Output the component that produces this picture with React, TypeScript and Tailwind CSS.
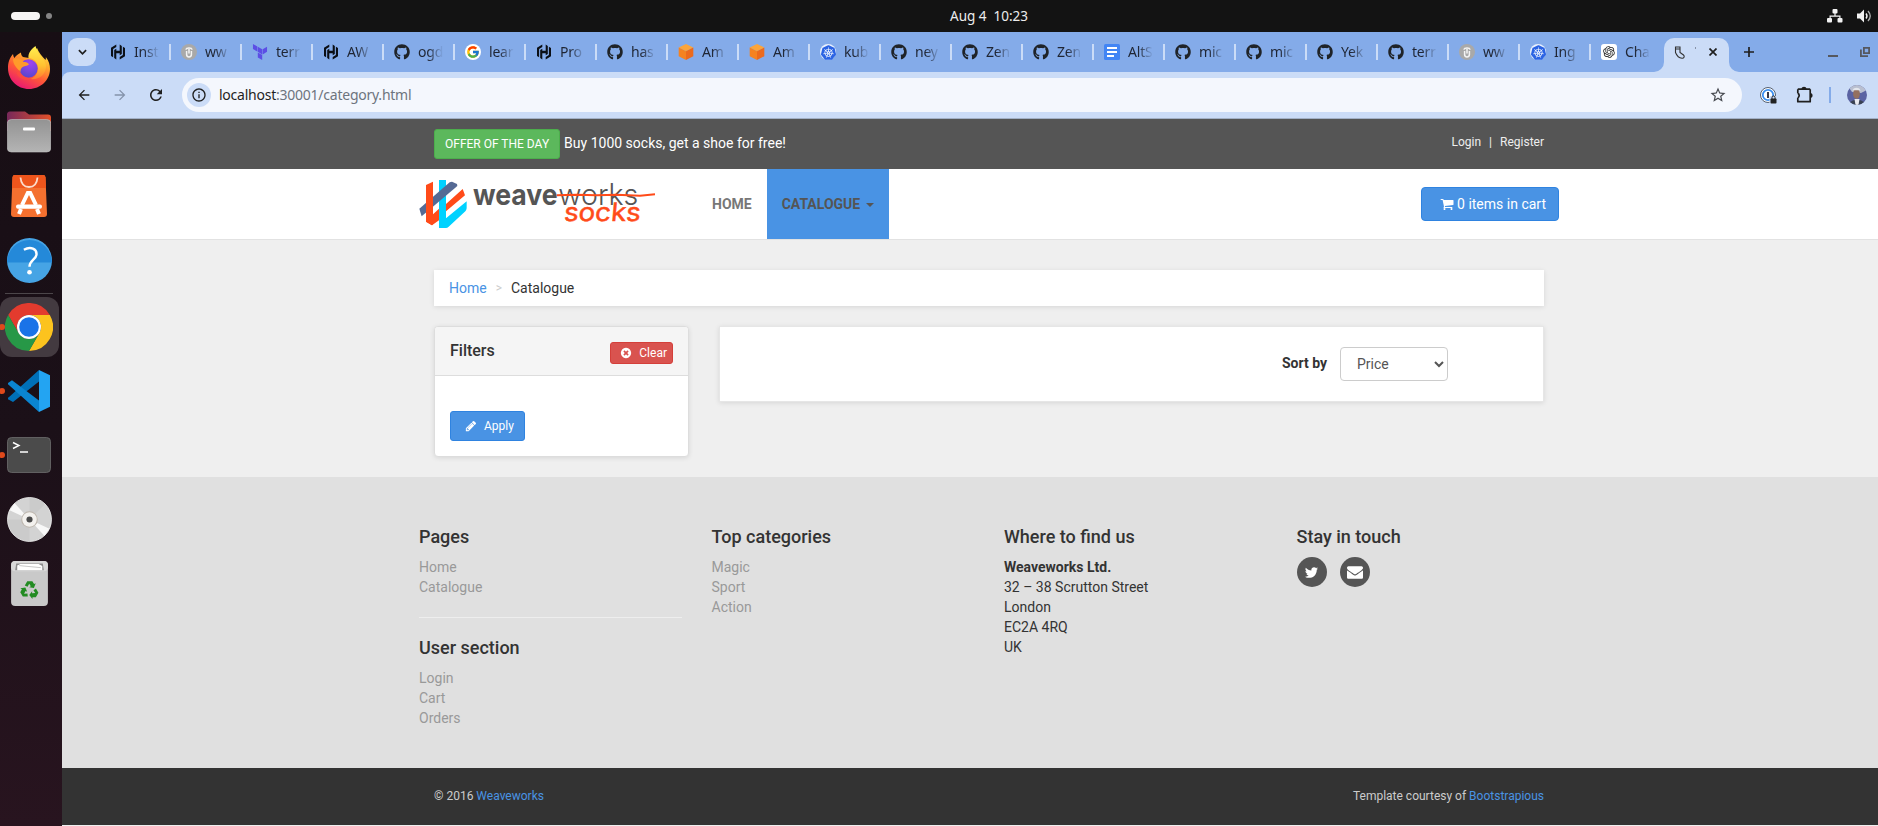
import React from "react";
import { FaGithub } from "react-icons/fa";
import { FcGoogle } from "react-icons/fc";
import { SiTerraform, SiKubernetes } from "react-icons/si";
import { RiOpenaiFill } from "react-icons/ri";
import { MdArrowBack, MdArrowForward, MdRefresh, MdStarBorder, MdOutlineInfo } from "react-icons/md";

/* ---------- favicons ---------- */

const HashiIcon = () => (
  <svg viewBox="0 0 16 16" className="size-4" fill="#0b0f16">
    <path d="M6.3.6 1 3.700v8.400l2.100 1.200V5l3.200-1.900z" />
    <path d="M9.700 15.400 15 12.300V3.900l-2.100-1.200V11l-3.200 1.900z" />
    <path d="M9.700.6v6.200H6.300V4.700L4.200 5.900v8.100l2.100 1.400V9.200h3.400v2.100l2.100-1.200V2z" />
  </svg>
);

const GlobeUIcon = () => (
  <svg viewBox="0 0 16 16" className="size-4">
    <circle cx="8" cy="8" r="8" fill="#a9a9a9" />
    <path d="M5.600 7v3.600a2.400 2.400 0 0 0 4.800 0V7M4.800 5.600C5.400 3.600 10.600 3.600 11.200 5.600M8 5v4.500" fill="none" stroke="#f4f4f4" strokeWidth="1.500" />
  </svg>
);

const GithubTabIcon = () => <FaGithub className="size-4 text-[#1f2328]" />;
const TerraTabIcon = () => <SiTerraform className="size-4 text-[#5c4ee5]" />;
const GoogleTabIcon = () => (
  <span className="flex size-4 items-center justify-center rounded-full bg-white">
    <FcGoogle className="size-3.5" />
  </span>
);
const AwsIcon = () => (
  <svg viewBox="0 0 16 16" className="size-4">
    <path d="M8 0 15.300 3.500 8 7.200.7 3.500z" fill="#fda53a" />
    <path d="M.7 3.500 8 7.200V16L.7 12.200z" fill="#f58220" />
    <path d="M15.300 3.500 8 7.200V16l7.300-3.800z" fill="#ec6a1d" />
  </svg>
);
const KubeIcon = () => (
  <span className="flex size-4 items-center justify-center rounded-full bg-[#e9f0fd]">
    <SiKubernetes className="size-[15px] text-[#2b63e3]" />
  </span>
);
const DocsIcon = () => (
  <svg viewBox="0 0 16 16" className="size-4">
    <rect width="16" height="16" rx="1.500" fill="#4285f4" />
    <path d="M3 4h10M3 8h10M3 12h7" stroke="#fff" strokeWidth="2" />
  </svg>
);
const GptIcon = () => (
  <span className="flex size-4 items-center justify-center rounded-[3px] bg-white">
    <RiOpenaiFill className="size-3.5 text-[#222]" />
  </span>
);

const tabs: { icon: () => React.JSX.Element; label: string }[] = [
  { icon: HashiIcon, label: "Inst" },
  { icon: GlobeUIcon, label: "ww" },
  { icon: TerraTabIcon, label: "terr" },
  { icon: HashiIcon, label: "AW" },
  { icon: GithubTabIcon, label: "ogd" },
  { icon: GoogleTabIcon, label: "lear" },
  { icon: HashiIcon, label: "Pro" },
  { icon: GithubTabIcon, label: "has" },
  { icon: AwsIcon, label: "Am" },
  { icon: AwsIcon, label: "Am" },
  { icon: KubeIcon, label: "kub" },
  { icon: GithubTabIcon, label: "ney" },
  { icon: GithubTabIcon, label: "Zen" },
  { icon: GithubTabIcon, label: "Zen" },
  { icon: DocsIcon, label: "AltS" },
  { icon: GithubTabIcon, label: "mic" },
  { icon: GithubTabIcon, label: "mic" },
  { icon: GithubTabIcon, label: "Yek" },
  { icon: GithubTabIcon, label: "terr" },
  { icon: GlobeUIcon, label: "ww" },
  { icon: KubeIcon, label: "Ing" },
  { icon: GptIcon, label: "Cha" },
];

/* ---------- dock ---------- */

const FirefoxIcon = () => (
  <svg viewBox="0 0 42 43" className="mb-px h-[43px] w-[42px]">
    <defs>
      <linearGradient id="ffBody" x1=".8" y1="0" x2=".25" y2="1">
        <stop offset="0" stopColor="#ffe84a" />
        <stop offset=".3" stopColor="#ffab2e" />
        <stop offset=".6" stopColor="#ff5a35" />
        <stop offset="1" stopColor="#e8117a" />
      </linearGradient>
      <radialGradient id="ffGlobe" cx=".6" cy=".2" r=".9">
        <stop offset="0" stopColor="#a044f0" />
        <stop offset="1" stopColor="#5146c8" />
      </radialGradient>
      <linearGradient id="ffTail" x1=".5" y1="0" x2=".5" y2="1">
        <stop offset="0" stopColor="#fff150" />
        <stop offset=".6" stopColor="#ffc030" />
        <stop offset="1" stopColor="#ff7a30" />
      </linearGradient>
    </defs>
    <path d="M5 8c.3 2 .8 3 1.500 4C8 9.500 10 8.500 13 6.500c0 2 .5 3 2 4.500l6 1 8-10c2 5 5 8 8.500 12 .5-1 .5-2 .3-3C41 15 42 19 42 23c0 11-9.400 20-21 20S0 34 0 22c0-5 1-9 5-14z" fill="url(#ffBody)" />
    <path d="M27.500 0C22 4 20 8 20.500 12c6 .5 9.500 5 9.500 10 0 6-3 9-8 11 9 1 16-4 16-13 0-7-8-9-10.500-20z" fill="url(#ffTail)" />
    <circle cx="20.500" cy="22.500" r="9.200" fill="url(#ffGlobe)" />
    <path d="M5 13c5-2 9 0 10.500 3 2.500 0 4.500.5 5.500 2.500-2 2-5 1-7 3-1.500 1.500-1.500 3-1.500 4.500C9 22 5 19 5 13z" fill="#ff9a2a" />
    <path d="M11.500 24c2 6 8 9.500 14 7-5 5-15 3-17-4z" fill="#ff4f3c" opacity=".6" />
  </svg>
);

const FilesIcon = () => (
  <svg viewBox="0 0 44 42" className="h-[42px] w-[44px]">
    <defs>
      <linearGradient id="flBack" x1="0" x2="1">
        <stop offset="0" stopColor="#77285a" />
        <stop offset="1" stopColor="#e2512a" />
      </linearGradient>
      <linearGradient id="flFront" x1="0" y1="0" x2="0" y2="1">
        <stop offset="0" stopColor="#939393" />
        <stop offset="1" stopColor="#b4b4b4" />
      </linearGradient>
    </defs>
    <path d="M0 4a3 3 0 0 1 3-3.500h15l4 3h19a3 3 0 0 1 3 3V20H0z" fill="url(#flBack)" />
    <rect x=".3" y="8.500" width="43.500" height="32.500" rx="4" fill="url(#flFront)" stroke="#c2c2c2" strokeWidth=".6" />
    <rect x="16" y="16.500" width="12" height="3" rx="1" fill="#fff" />
  </svg>
);

const SoftwareIcon = () => (
  <svg viewBox="0 0 36 42" className="h-[42px] w-[36px]">
    <path d="M4 0h28a2.500 2.500 0 0 1 2.500 2.300L36 39a3 3 0 0 1-3 3H3a3 3 0 0 1-3-3L1.500 2.300A2.500 2.500 0 0 1 4 0z" fill="#f4702f" />
    <path d="M4 0h28a2.500 2.500 0 0 1 2.500 2.300L35 13H1l.5-10.700A2.500 2.500 0 0 1 4 0z" fill="#ee551c" />
    <path d="M9.500 2.500c.5 6 3.500 9.500 8.500 9.500s8-3.500 8.500-9.500" fill="none" stroke="#fbdccb" strokeWidth="1.800" />
    <path d="M11 30 16.800 18h2.400L25 30M10 34 8 39M26 34l2 5" fill="none" stroke="#fff" strokeWidth="4" />
    <rect x="5" y="29.500" width="26" height="4.200" rx="2" fill="#fff" />
  </svg>
);

const HelpIcon = () => (
  <svg viewBox="0 0 44 44" className="size-[45px]">
    <circle cx="22" cy="22" r="22" fill="#46a4e5" />
    <path d="M0 24a22 22 0 1 1 44 0z" fill="#2489d9" />
    <path d="M16.500 11.500C23 8 29.500 10.500 28.800 16.500c-.6 4.500-6.800 5.500-6.800 11.500" fill="none" stroke="#fff" strokeWidth="2.400" />
    <circle cx="22" cy="33.500" r="2.300" fill="#fff" />
  </svg>
);

const ChromeIcon = () => (
  <svg viewBox="0 0 48 48" className="size-12">
    <path d="M3.200 12A24 24 0 0 1 44.800 12H24A12 12 0 0 0 13.600 30Z" fill="#e33b2e" />
    <path d="M44.800 12A24 24 0 0 1 24 48L34.400 30A12 12 0 0 0 24 12Z" fill="#fcc31e" />
    <path d="M24 48A24 24 0 0 1 3.200 12L13.600 30A12 12 0 0 0 34.400 30Z" fill="#279847" />
    <circle cx="24" cy="24" r="12" fill="#fff" />
    <circle cx="24" cy="24" r="9.800" fill="#1a73e8" />
  </svg>
);

const CodeIcon = () => (
  <svg viewBox="0 0 42 42" className="size-[42px]">
    <path d="M31 0v11.500L5 32 .5 29.500a1 1 0 0 1 0-2z" fill="#0070b8" />
    <path d="M0 13 4 10.300 31 30.500V42L.3 14.600a1 1 0 0 1-.3-1.600z" fill="#0a85d1" />
    <path d="M31 0 42 5.300V36.700L31 42z" fill="#23a4f2" />
  </svg>
);

const TerminalIcon = () => (
  <svg viewBox="0 0 44 36" className="h-[36px] w-[44px]">
    <rect x=".5" y=".5" width="43" height="35" rx="4" fill="#4b4b4b" stroke="#6d6d6d" strokeWidth=".8" />
    <path d="m6 5.500 6 3-6 3M13 15h8" fill="none" stroke="#fff" strokeWidth="1.400" />
  </svg>
);

const DiscIcon = () => (
  <svg viewBox="0 0 44 44" className="size-[45px]">
    <circle cx="22" cy="22" r="21.500" fill="#d3d3d3" stroke="#f0f0f0" strokeWidth=".8" />
    <path d="M22 22V1A21 21 0 0 1 37 7zM22 22H1a21 21 0 0 0 6 15zM22 22v21a21 21 0 0 1-15-6z" fill="#cbcbcb" />
    <path d="M22 22 2.500 13l5-7zM22 22l19.500 9-5 7z" fill="#f8f8f8" />
    <circle cx="22" cy="22" r="7.600" fill="#f3f1ee" stroke="#bdb6ad" strokeWidth="1" />
    <circle cx="22" cy="22" r="3" fill="#4a4a4a" />
  </svg>
);

const TrashIcon = () => (
  <svg viewBox="0 0 36 44" className="h-[45px] w-[37px]">
    <rect width="36" height="44" rx="4" fill="#c9c9c9" />
    <rect width="36" height="10" rx="4" fill="#d9d9d9" />
    <path d="M4 9 5 2.500h26L32 9z" fill="#8c8c8c" />
    <path d="M6 9V4.500l3-1.500h18l3.500 2V9z" fill="#fff" />
    <path d="M8 4.500 29 6.500" stroke="#bbb" strokeWidth=".8" />
    <g fill="#228b22" transform="translate(18 28.500)">
      {[0, 120, 240].map((a) => (
        <g key={a} transform={`rotate(${a})`}>
          <path d="M-4.600-4.600-2.200-8.800h5l1.700 2.800 1.600-.8-1.800 4.600-4.600-.6 1.600-.9-1.600-2.600-1.600 2.900z" />
        </g>
      ))}
    </g>
  </svg>
);

const DockSlot = ({ children, running, active }: { children: React.ReactNode; running?: boolean; active?: boolean }) => (
  <div className="relative flex h-16 w-full items-center">
    <div className={active ? "flex h-[60px] w-[59px] items-center justify-center rounded-xl bg-[#433a40] pr-px" : "flex h-[60px] w-[58px] items-center justify-center"}>
      {children}
    </div>
    {running && <span className="absolute top-[29px] -left-[1px] size-[6px] rounded-full bg-[#e0491b]" />}
  </div>
);

const Dock = () => (
  <aside className="flex w-[62px] shrink-0 flex-col bg-linear-to-b from-[#170e14] via-[#1b1018] to-[#28141f] pt-1">
    <DockSlot><FirefoxIcon /></DockSlot>
    <DockSlot><FilesIcon /></DockSlot>
    <DockSlot><SoftwareIcon /></DockSlot>
    <DockSlot><HelpIcon /></DockSlot>
    <div className="mt-px mb-px ml-[5px] h-px w-12 bg-[#4c464a]" />
    <DockSlot running active><ChromeIcon /></DockSlot>
    <DockSlot running><CodeIcon /></DockSlot>
    <DockSlot running><TerminalIcon /></DockSlot>
    <DockSlot><DiscIcon /></DockSlot>
    <DockSlot><TrashIcon /></DockSlot>
  </aside>
);

/* ---------- desktop bar ---------- */

const SystemBar = () => (
  <header className="flex h-8 items-center bg-[#131313] pl-[11px]">
    <div className="flex w-[939px] items-center gap-[6px]">
      <span className="h-2 w-[29px] rounded-full bg-[#f6f5f4]" />
      <span className="size-[6px] rounded-full bg-[#858585]" />
    </div>
    <div className="font-['Noto_Sans',sans-serif] text-[13.5px] leading-8 whitespace-pre text-[#ececec]">Aug 4  10:23</div>
    <div className="ml-auto flex items-center gap-[14px] pr-[6px]">
      <svg viewBox="0 0 16 14" className="h-[14px] w-4" fill="#f2f2f2">
        <rect x="5.500" width="5" height="4.500" rx="1" />
        <rect x="0" y="9" width="5" height="4.500" rx="1" />
        <rect x="10.500" y="9" width="5" height="4.500" rx="1" />
        <path d="M7.400 4h1.200v2.500h4.900v3h-1.200V7.700H3.700v1.800H2.500v-3h4.900z" />
      </svg>
      <svg viewBox="0 0 15 14" className="h-[14px] w-[15px]">
        <path d="M0 4.500h3L7 .5v13L3 9.500H0z" fill="#f2f2f2" />
        <path d="M9 4.500q2 2.500 0 5" fill="none" stroke="#f2f2f2" strokeWidth="1.400" />
        <path d="M11 2q4.500 5 0 10" fill="none" stroke="#b0b0b0" strokeWidth="1.300" />
      </svg>
    </div>
  </header>
);

/* ---------- browser ---------- */

const TabStrip = () => (
  <div className="flex h-10 bg-[#84abe9] pl-[6px]">
    <div className="mt-[6px] mr-[14px] flex size-7 shrink-0 items-center justify-center rounded-[9px] bg-[#cbdcf7]">
      <svg viewBox="0 0 10 6" className="h-[6px] w-[9px]">
        <path d="m1 1 4 4 4-4" fill="none" stroke="#1f1f1f" strokeWidth="1.900" />
      </svg>
    </div>
    {tabs.map(({ icon: Icon, label }, i) => (
      <div key={i} className="flex w-[71px] shrink-0 items-center">
        <Icon />
        <span className="ml-2 w-[25px] mask-r-from-40% mask-r-to-100% font-['Noto_Sans',sans-serif] text-sm leading-5 tracking-[-0.2px] whitespace-nowrap text-[#1f2533]">{label}</span>
        {i < tabs.length - 1 && <span className="ml-[10px] h-4 w-[2px] bg-[#cbdcf7]" />}
      </div>
    ))}
    <div className="relative -ml-2 mt-[6px] flex h-[34px] w-[65px] shrink-0 items-center rounded-t-[10px] bg-[#cbdcf7] pb-[6px] pl-[10px]">
      <svg viewBox="0 0 10 10" className="absolute bottom-0 -left-[10px] size-[10px]"><path d="M10 0v10H0A10 10 0 0 0 10 0z" fill="#cbdcf7" /></svg>
      <svg viewBox="0 0 10 10" className="absolute -right-[10px] bottom-0 size-[10px]"><path d="M0 0v10h10A10 10 0 0 1 0 0z" fill="#cbdcf7" /></svg>
      <svg viewBox="0 0 12 13" className="h-[13px] w-3">
        <path d="M1.500 1h4.500v5.500l3.500 2.500c1.600 1.500.3 3.400-1.500 3.200C5 12 2.500 9 1.500 6.500zM1.500 3H6" fill="none" stroke="#333" strokeWidth="1.100" />
      </svg>
      <span className="ml-[9px] h-[2px] w-px -translate-y-1 bg-[#8793a8]" />
      <svg viewBox="0 0 8 8" className="ml-[13px] size-2"><path d="m.5.5 7 7m0-7-7 7" stroke="#1f1f1f" strokeWidth="1.700" /></svg>
    </div>
    <svg viewBox="0 0 10 10" className="mt-[15px] ml-[15px] size-[10px] shrink-0"><path d="M5 0v10M0 5h10" stroke="#1f1f1f" strokeWidth="1.700" /></svg>
    <span className="mt-[23px] ml-[74px] h-[2px] w-[10px] shrink-0 bg-[#55585f]" />
    <svg viewBox="0 0 10 10" className="mt-[15px] ml-[22px] size-[10px] shrink-0" fill="none" stroke="#55585f" strokeWidth="1.800">
      <path d="M3.900.9h5.200v5.200H3.900zM.9 2.500v6.600H8" />
    </svg>
  </div>
);

const Toolbar = () => (
  <div className="bg-[#84abe9]">
    <div className="flex h-[47px] items-center rounded-tl-lg border-b border-[#a2b0c6] bg-[#cbdcf7] pl-3 text-[#1f1f1f]">
      <MdArrowBack className="mr-4 size-5 p-[2px]" />
      <MdArrowForward className="mr-4 size-5 p-[2px] text-[#8593ab]" />
      <MdRefresh className="mr-4 size-5 p-px" />
      <div className="flex h-[34px] w-[1560px] shrink-0 items-center rounded-full bg-[#f4f7fd] pl-[5px]">
        <span className="flex size-6 items-center justify-center rounded-full bg-[#cbdcf7]">
          <MdOutlineInfo className="size-4" />
        </span>
        <span className="-mt-px ml-2 font-['Noto_Sans',sans-serif] text-[14px] tracking-[-0.24px] text-[#1f1f1f]">
          localhost<span className="text-[#6d747e]">:30001/category.html</span>
        </span>
        <MdStarBorder className="mr-[15px] ml-auto size-[18px] text-[#474a50]" />
      </div>
      <svg viewBox="0 0 17 17" className="ml-[18px] size-[17px] shrink-0">
        <circle cx="8" cy="8" r="7.500" fill="#fff" stroke="#545f70" />
        <circle cx="8" cy="8" r="5.200" fill="#fff" stroke="#3b8ff0" strokeWidth="1.800" />
        <path d="M8 5v6" stroke="#223" strokeWidth="1.800" />
        <rect x="9.500" y="9" width="7.500" height="8" rx="1" fill="#cbdcf7" />
        <rect x="10.500" y="11.500" width="6" height="5" rx=".8" fill="#222" />
        <path d="M12 12v-1.500a1.500 1.500 0 0 1 3 0V12" fill="none" stroke="#222" />
      </svg>
      <svg viewBox="0 0 18 18" className="ml-[19px] size-[18px] shrink-0" fill="none" stroke="#1f1f1f" strokeWidth="1.700">
        <path d="M14.200 3.200V15.700H1.800V12M1.800 3.200V7M1.800 7q2.800 2.500 0 5M1.800 3.200h12.400" strokeLinejoin="round" />
        <path d="M5.500 3.200h5c0-3.200-5-3.200-5 0zM14.200 7v5c3.200 0 3.200-5 0-5z" fill="#1f1f1f" stroke="none" />
      </svg>
      <span className="ml-[15px] h-4 w-[2px] shrink-0 bg-[#84abe9]" />
      <svg viewBox="0 0 20 20" className="ml-4 size-5 shrink-0">
        <defs><clipPath id="av"><circle cx="10" cy="10" r="10" /></clipPath></defs>
        <g clipPath="url(#av)">
          <rect width="20" height="20" fill="#5a63a3" />
          <path d="M0 0h20v5l-6 3-9-1z" fill="#b9bfd0" />
          <path d="M2 20c0-3 3-5 8-5s8 2 8 5z" fill="#3a4252" />
          <path d="M7.500 14h5l-1 6h-3z" fill="#e9eaf0" />
          <ellipse cx="9.500" cy="9" rx="3.400" ry="4.800" fill="#94705f" />
          <path d="M5.500 6c0-4.500 8-4.500 8 0l-1-.8h-6z" fill="#e4e6ec" />
        </g>
      </svg>
    </div>
  </div>
);

/* ---------- shop page ---------- */

const Glyph = ({ d, className }: { d: string; className: string }) => (
  <svg viewBox="0 0 1792 1792" className={className} fill="currentColor"><path d={d} /></svg>
);

const CART = "M704 1536q0 52-38 90t-90 38-90-38-38-90 38-90 90-38 90 38 38 90zm896 0q0 52-38 90t-90 38-90-38-38-90 38-90 90-38 90 38 38 90zm128-1088v512q0 24-16.500 42.500t-40.500 21.500l-1044 122q13 60 13 70 0 16-24 64h920q26 0 45 19t19 45-19 45-45 19h-1024q-26 0-45-19t-19-45q0-11 8-31.500t16-36 21.500-40 15.500-29.500l-177-823h-204q-26 0-45-19t-19-45 19-45 45-19h256q16 0 28.500 6.500t19.500 15.500 13 24.500 8 26 5.500 29.500 4.500 26h1201q26 0 45 19t19 45z";
const TIMES = "M1277 1122q0-26-19-45l-181-181 181-181q19-19 19-45 0-27-19-46l-90-90q-19-19-46-19-26 0-45 19l-181 181-181-181q-19-19-45-19-27 0-46 19l-90 90q-19 19-19 46 0 26 19 45l181 181-181 181q-19 19-19 45 0 27 19 46l90 90q19 19 46 19 26 0 45-19l181-181 181 181q19 19 45 19 27 0 46-19l90-90q19-19 19-46zm387-226q0 209-103 385.500t-279.500 279.500-385.500 103-385.500-103-279.500-279.500-103-385.500 103-385.500 279.500-279.500 385.500-103 385.500 103 279.500 279.500 103 385.500z";
const PENCIL = "M491 1536l91-91-235-235-91 91v107h128v128h107zm523-928q0-22-22-22-10 0-17 7l-542 542q-7 7-7 17 0 22 22 22 10 0 17-7l542-542q7-7 7-17zm-54-192l416 416-832 832h-416v-416zm683 96q0 53-37 90l-166 166-416-416 166-165q36-38 90-38 53 0 91 38l235 234q37 39 37 91z";
const TWITTER = "M1684 408q-67 98-162 167 1 14 1 42 0 130-38 259.500t-115.500 248.500-184.500 210.500-258 146-323 54.500q-271 0-496-145 35 4 78 4 225 0 401-138-105-2-188-64.500t-114-159.500q33 5 61 5 43 0 85-11-112-23-185.500-111.500t-73.500-205.500v-4q68 38 146 41-66-44-105-115t-39-154q0-88 44-163 121 149 294.500 238.500t371.500 99.500q-8-38-8-74 0-134 94.500-228.500t228.500-94.500q140 0 236 102 109-21 205-78-37 115-142 178 93-10 186-50z";
const ENVELOPE = "M1792 710v794q0 66-47 113t-113 47h-1472q-66 0-113-47t-47-113v-794q44 49 101 87 362 246 497 345 57 42 92.500 65.500t94.500 48 110 24.500h2q51 0 110-24.500t94.500-48 92.500-65.500q170-123 498-345 57-39 100-87zm0-294q0 79-49 151t-122 123q-376 261-468 325-10 7-42.500 31t-54 38.500-52 32.500-57.500 27-50 9h-2q-23 0-50-9t-57.500-27-52-32.500-54-38.500-42.500-31q-91-64-262-182.500t-205-142.500q-62-42-117-115.500t-55-136.500q0-78 41.500-130t118.500-52h1472q65 0 112.500 47t47.500 113z";

const Logo = () => (
  <svg viewBox="27 42 720 150" className="h-[50px] w-[240px]">
    <path d="M69 148 87 131V166L66 181 48 170V148zM108 117 158 72 165 91 108 139z" fill="#ff4b19" />
    <path d="M87 45h21V160L170 109V130Q169 136 166 139L116 185Q112 189 108 189H87z" fill="#00d2ff" />
    <path d="M28 131 119 52Q122 50 126 50L141 57 142 63 35 154z" fill="#556a94" />
    <path d="M48 60 69 50V176L66 181 48 170z" fill="#ff4b19" />
    <text x="189" y="119" fontFamily="Inter, sans-serif" fontWeight="700" fontSize="88" textLength="254" lengthAdjust="spacingAndGlyphs" fill="#555">weave</text>
    <text x="445" y="119" fontFamily="Inter, sans-serif" fontWeight="300" fontSize="88" textLength="240" lengthAdjust="spacingAndGlyphs" fill="#555">works</text>
    <text x="460" y="167" fontFamily="Inter, sans-serif" fontWeight="400" fontSize="76" textLength="230" lengthAdjust="spacingAndGlyphs" fill="#ff4b19" stroke="#ff4b19" strokeWidth="1.500" transform="translate(15 0) skewX(-5)">socks</text>
    <path d="M440 91 500 89 560 91 620 89 690 92 735 88" fill="none" stroke="#ff4b19" strokeWidth="6" />
  </svg>
);

const shadow = "shadow-[0_1px_5px_rgba(0,0,0,0.1)]";

const FooterList = ({ title, items }: { title: string; items: string[] }) => (
  <div>
    <h4 className="mb-[10px] text-[18px] leading-5 font-medium">{title}</h4>
    <ul className="leading-5 text-[#999]">
      {items.map((t) => <li key={t}><a href="#">{t}</a></li>)}
    </ul>
  </div>
);

const Page = () => (
  <main className="flex flex-1 flex-col bg-[#efefef] font-[Roboto,sans-serif] text-sm leading-5 text-[#333]">
    <div className="h-[50px] bg-[#555]">
      <div className="mx-auto flex w-[1110px] items-start justify-between pt-[10px] text-white">
        <div className="flex items-center gap-1">
          <a href="#" className="flex h-[30px] items-center rounded-[3px] border border-[#4cae4c] bg-[#5cb85c] px-[10px] text-xs">OFFER OF THE DAY</a>
          <a href="#" className="-mt-[2px]">Buy 1000 socks, get a shoe for free!</a>
        </div>
        <div className="flex gap-2 pt-[3px] text-xs leading-5 text-[#eee]">
          <a href="#">Login</a><span>|</span><a href="#">Register</a>
        </div>
      </div>
    </div>

    <nav className="h-[71px] border-b border-[#e2e2e2] bg-white">
      <div className="mx-auto flex h-[70px] w-[1140px] items-stretch">
        <div className="w-[278px] pt-[10px]"><Logo /></div>
        <a href="#" className="flex items-center px-[15px] font-bold text-[#777]">HOME</a>
        <a href="#" className="flex items-center bg-[#4993e4] px-[15px] font-bold text-[#555]">
          CATALOGUE
          <span className="mt-px ml-[6px] border-x-4 border-t-4 border-x-transparent border-t-[#555]" />
        </a>
        <a href="#" className="mt-[18px] ml-auto flex h-[34px] items-center rounded border border-[#2f83e0] bg-[#4993e4] pr-3 pl-[18px] text-white">
          <Glyph d={CART} className="mr-[3px] size-[14px]" />
          0 items in cart
        </a>
      </div>
    </nav>

    <section className="h-[237px]">
      <div className="mx-auto w-[1110px] pt-[30px]">
        <ol className={`flex h-9 items-center bg-white px-[15px] ${shadow}`}>
          <li className="text-[#4993e4]">Home</li>
          <li className="px-[9px] text-xs text-[#ccc]">&gt;</li>
          <li>Catalogue</li>
        </ol>
        <div className="mt-5 flex items-start gap-[30px]">
          <div className={`w-[255px] rounded border border-[#ddd] bg-white ${shadow}`}>
            <div className="flex h-[49px] items-start justify-between rounded-t-[3px] border-b border-[#ddd] bg-[#f5f5f5] px-[15px] pt-[15px]">
              <h3 className="text-base leading-[18px] font-medium">Filters</h3>
              <a href="#" className="flex h-[22px] items-center rounded-[3px] border border-[#d43f3a] bg-[#d9534f] pr-[5px] pl-[9px] text-xs leading-[18px] text-white">
                <Glyph d={TIMES} className="mr-[7px] size-3" />
                Clear
              </a>
            </div>
            <div className="h-20 px-[15px] pt-[35px]">
              <button className="flex h-[30px] items-center rounded-[3px] border border-[#2f83e0] bg-[#4993e4] pr-[10px] pl-[14px] text-xs text-white">
                <Glyph d={PENCIL} className="mr-[7px] size-3" />
                Apply
              </button>
            </div>
          </div>
          <div className={`flex h-[76px] flex-1 items-start justify-end border border-[#e6e6e6] bg-white pt-5 pr-[95px] ${shadow}`}>
            <label className="pt-[6px] pr-[13px] font-bold">Sort by</label>
            <select className="h-[34px] w-[108px] rounded border border-[#ccc] bg-white px-3 py-[6px] text-[#555]">
              <option>Price</option>
            </select>
          </div>
        </div>
      </div>
    </section>

    <footer className="h-[291px] bg-[#e0e0e0]">
      <div className="mx-auto grid w-[1140px] grid-cols-4 gap-x-[30px] pt-[50px]">
        <div>
          <FooterList title="Pages" items={["Home", "Catalogue"]} />
          <hr className="mt-5 mb-5 w-[263px] border-[#eee]" />
          <FooterList title="User section" items={["Login", "Cart", "Orders"]} />
        </div>
        <FooterList title="Top categories" items={["Magic", "Sport", "Action"]} />
        <div>
          <h4 className="mb-[10px] text-[18px] leading-5 font-medium">Where to find us</h4>
          <p>
            <strong className="font-bold">Weaveworks Ltd.</strong><br />
            32 – 38 Scrutton Street<br />London<br />EC2A 4RQ<br />UK
          </p>
        </div>
        <div>
          <h4 className="mb-[10px] text-[18px] leading-5 font-medium">Stay in touch</h4>
          <div className="flex gap-[13px] text-white">
            <a href="#" className="flex size-[30px] items-center justify-center rounded-full bg-[#555]"><Glyph d={TWITTER} className="size-[15px]" /></a>
            <a href="#" className="flex size-[30px] items-center justify-center rounded-full bg-[#555]"><Glyph d={ENVELOPE} className="size-4" /></a>
          </div>
        </div>
      </div>
    </footer>

    <div className="h-[57px] bg-[#333] text-xs text-[#ccc]">
      <div className="mx-auto flex w-[1110px] justify-between pt-[18px] leading-5">
        <p>© 2016 <a href="#" className="text-[#4993e4]">Weaveworks</a></p>
        <p>Template courtesy of <a href="#" className="text-[#4993e4]">Bootstrapious</a></p>
      </div>
    </div>
  </main>
);

/* The browser window is wider than the visible desktop, so its right edge runs off screen. */
export default function App() {
  return (
    <div className="flex h-[826px] w-[1878px] flex-col overflow-hidden">
      <SystemBar />
      <div className="flex min-h-0 flex-1">
        <Dock />
        <div className="flex w-[1854px] shrink-0 flex-col">
          <TabStrip />
          <Toolbar />
          <Page />
        </div>
      </div>
    </div>
  );
}
